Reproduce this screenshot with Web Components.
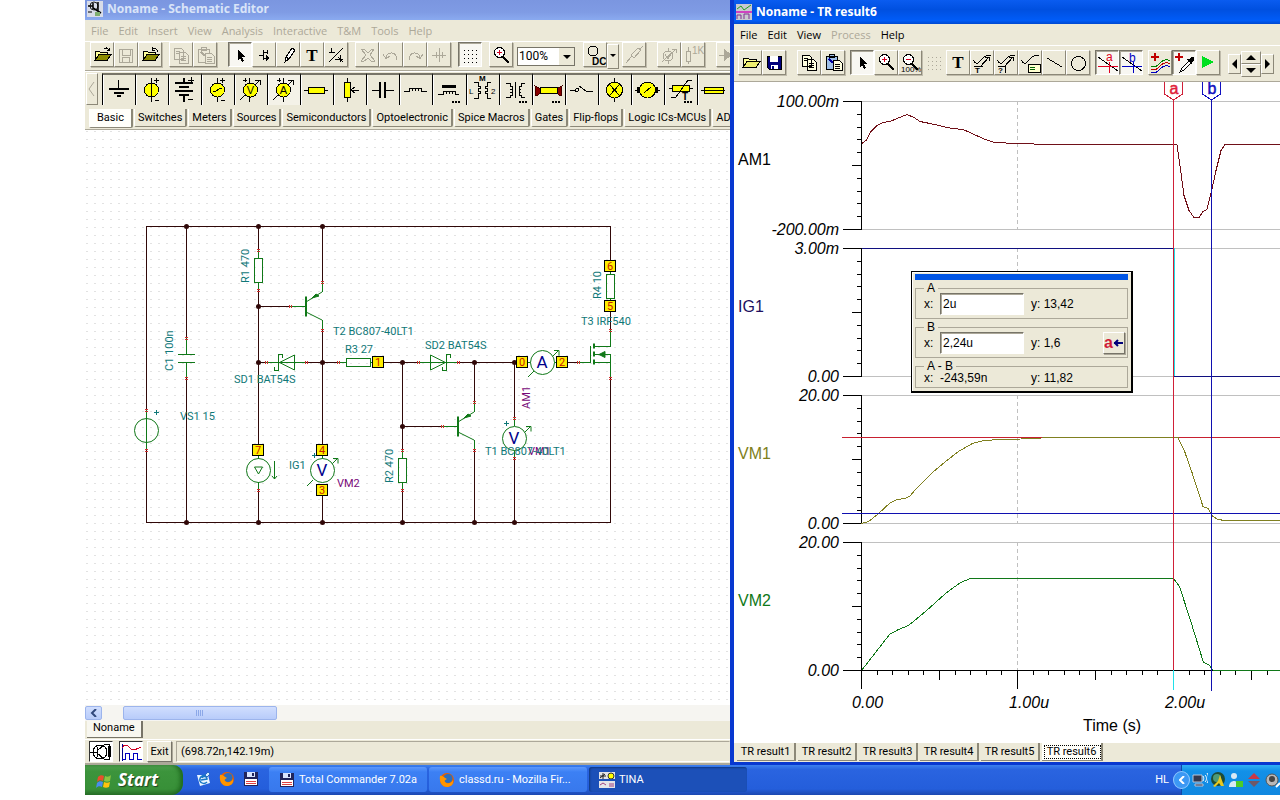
<!DOCTYPE html>
<html lang="en">
<head>
<meta charset="utf-8">
<title>Noname - Schematic Editor</title>
<style>
  html, body { height: 100%; }
  body {
    margin: 0;
    background: white;
    font: 11px/14px Roboto, "Liberation Sans", sans-serif;
    color: black;
    overflow: hidden;
  }
</style>
</head>
<body>
<xp-desktop>
  <schematic-editor></schematic-editor>
  <result-window></result-window>
</xp-desktop>

<script>
// ---- icons -------------------------------------------------------------
const FOLDER = '<path d="M5 17V8h4l1 1h7v3" fill="#ffff99" stroke="#000"/><path d="M5 17.500l4-6h12l-4 6z" fill="#8c8c00" stroke="#000"/>';
const CURSOR = '<path d="M10 7v10l2-2 2 4 2-1-2-4h3z" fill="currentColor"/>';
const PAGES = '<path d="M5 5h7l2 2v9H5zM10 9h6l3 3v8h-9z" fill="var(--page, none)" stroke="currentColor"/><path d="M7 8h4M7 10h3M12 13h5M12 15h5M12 17h5" stroke="currentColor"/>';
const LENS = '<path d="M14 14l6 6" stroke="#000" stroke-width="2"/><circle cx="10.500" cy="9.500" r="5" fill="#fff" stroke="#000"/>';
const GRID = '<path d="M6 7.500h14M6 11.500h14M6 15.500h14M6 19.500h14" stroke="currentColor" stroke-dasharray="1 3"/>';
const CURVE = '<path d="M3 10c3 5 5 4 8 0s6-5 10-4" stroke="currentColor"/>';
const MORE = '<path d="M20 28h8" stroke="#000" stroke-width="2" stroke-dasharray="2 1"/>';

const ICONS = {
  // 24 x 24, toolbars
  open: FOLDER + '<path d="M14 6c2-2 4-1 5 2m-2-1l2 1 1-3" stroke="#000"/>',
  openBack: FOLDER + '<path d="M20 9c-1-4-4-4-6-2m0-3v3h3" stroke="#000"/>',
  openPlain: '<path d="M5 17V8h5l1 1h7v3" fill="#ffff99" stroke="#000"/><path d="M5 17.500l4-6h13l-4 6z" fill="#eeee70" stroke="#000"/>',
  save: '<path d="M5 6h13v13H5zM8 6v6h8V6M8 19v-5h7v5" stroke="currentColor"/>',
  saveBlue: '<path d="M5 6h14v13H7l-2-2z" fill="#00007b" stroke="#000"/><path d="M8 6h8v6H8z" fill="#fff"/><path d="M9 15h7v4H9z" fill="#fff"/><path d="M10 16h2v3h-2z" fill="#00007b"/>',
  copy: PAGES,
  paste: '<path d="M5 6h11v13H5zM8 4h5v3H8z" fill="var(--clip, none)" stroke="currentColor"/><path d="M12 10h6l3 3v7h-9z" fill="var(--page, #ece9d8)" stroke="currentColor"/><path d="M14 14h5M14 16h5M14 18h5" stroke="currentColor"/><path d="M8 9l4 4" stroke="var(--arrow, currentColor)" stroke-width="2"/>',
  cursor: CURSOR,
  wire: '<path d="M11 7v10M7 12h4M11 9h4M11 15h6M15 7v4" stroke="#000"/><path d="M14 12v6l4-3z" fill="#000"/>',
  pen: '<path d="M9 19l1-5 6-9 3 2-6 9zM10 14l3 2" stroke="#000" fill="#fff"/>',
  text: '<text x="12" y="18" font-size="17" font-weight="bold" text-anchor="middle" font-family="Liberation Serif, serif" fill="currentColor">T</text>',
  note: '<path d="M5 9h6M7 5v5M5 19L19 5M11 16h8M16 12v7M14 14l5 5" stroke="#000"/>',
  erase: '<path d="M6 6l3 0 4 4 4-4h2l-4 6 5 6-3 1-4-4-5 4-2-1 5-6z" stroke="currentColor"/>',
  undo: '<path d="M7 15c0-7 11-7 11 2M4 11l3 5 4-3" stroke="currentColor"/>',
  redo: '<path d="M17 15c0-7-11-7-11 2M20 11l-3 5-4-3" stroke="currentColor"/>',
  mirror: '<path d="M5 12h14M12 5v14M9 9v6M15 9v6" stroke="currentColor"/>',
  grid: GRID,
  zoom: LENS + '<path d="M8 9.500h5M10.500 7v5" stroke="#d00020" stroke-width="1"/>',
  zoom100: LENS + '<path d="M8 9.500h5" stroke="#d00020" stroke-width="1"/><text x="3" y="22" font-size="8">100%</text>',
  dc: '<circle cx="10" cy="8" r="5" stroke="#000"/><text x="9" y="22" font-size="10" font-weight="bold">DC</text>',
  probe: '<path d="M4 20l6-7M9 12l3 3 7-8-3-2zM18 6l3-3" stroke="currentColor"/>',
  meter: '<circle cx="11" cy="13" r="5" stroke="currentColor"/><path d="M8 11l3 5 3-5M11 5v3M11 18v3M5 19L19 6M15 6h4v4" stroke="currentColor"/>',
  ohm: '<path d="M5 8h4v10H5zM7 4v4M7 18v3" stroke="currentColor"/><text x="11" y="11" font-size="10" fill="currentColor">1K</text>',
  diode: '<path d="M3 12h20" stroke="currentColor"/><path d="M8 6v12l8-6z" fill="currentColor"/>',
  curveT: CURVE + '<path d="M10 17L19 7M15 7h4v4M4 16h9" stroke="#000"/><text x="5" y="23" font-size="8" font-weight="bold">T</text>',
  curveQ: CURVE + '<path d="M10 17L19 7M15 7h4v4M4 16h7v7" stroke="#000"/><text x="4" y="23" font-size="8" font-weight="bold">?</text>',
  legend: CURVE + '<path d="M10 14h12v8H10z" fill="#ffffd0" stroke="#000"/><path d="M12 17h5M12 19h5" stroke="#060"/>',
  line: '<path d="M5 8l15 9" stroke="#000"/>',
  circle: '<circle cx="12.500" cy="13.500" r="7" stroke="#000"/>',
  markA: '<path d="M3 7l20 14" stroke="#000"/><path d="M3 16h20M14 12v11" stroke="#e00020"/><text x="11" y="11" font-size="12" fill="#e00020">a</text>',
  markB: '<path d="M3 7l20 14" stroke="#000"/><path d="M3 16h20M14 12v11" stroke="#0000c0"/><text x="10" y="12" font-size="12" fill="#0000c0">b</text>',
  addCurves: '<path d="M7 3v8M3 7h8" stroke="#c00000" stroke-width="2"/><path d="M3 16c4 2 6 0 9-3s6-5 10-2" stroke="#008000"/><path d="M3 19c4 2 6 0 9-3s6-5 10-2" stroke="#c00000"/><path d="M3 22c4 2 6 0 9-3s6-5 10-2" stroke="#0000c0"/>',
  addPick: '<path d="M7 3v8M3 7h8" stroke="#c00000" stroke-width="2"/><path d="M8 22l2-4 7-7 2 2-7 7z" fill="#fff" stroke="#000"/><path d="M14 9l3 0 2-2 3 0v3l-2 2v3z" fill="#000"/>',
  play: '<path d="M6 6v12l12-6z" fill="#00e020"/>',
  circuit: '<rect width="24" height="22" fill="#fff"/><circle cx="11" cy="11" r="7" stroke="#000"/><path d="M1 11h7M8 6v10M8 10l7-6M8 12l7 6M15 3h5v15h-5" stroke="#000"/><path d="M19 5h3v11h-3z" fill="#000"/>',
  scope: '<rect width="24" height="22" fill="#fff"/><path d="M3 3v17h20" stroke="#00008b"/><path d="M3 7c3-5 6-3 8 0s5 2 11-1" stroke="#d00020"/><path d="M3 18h3v-6h4v6h4v-6h4v6h5" stroke="#0000c0"/>',

  // 33 x 31, component bar
  ground: '<path d="M16.500 6v9" stroke="#000"/><path d="M7 15h20M12 19h10M15 22h4" stroke="#000" stroke-width="2"/>',
  source: '<circle cx="16.500" cy="16" r="7" fill="#ff0" stroke="#000"/><path d="M16.500 4v24M19 6h5M21 4v5M20 26h4" stroke="#000"/>',
  battery: '<path d="M16 4v5M7 9h18M11 13h10M7 17h18M11 21h10M16 21v7" stroke="#000" stroke-width="2"/><path d="M20 6h6M23 3v6M20 25h5" stroke="#000"/>',
  sine: '<circle cx="16.500" cy="16" r="7" fill="#ff0" stroke="#000"/><path d="M16.500 4v5M16.500 23v5M19 6h5M21 4v5M20 26h4M12 18c3 0 6-4 9-4" stroke="#000"/>',
  volt: '<path d="M6 26L26 6M21 6h5v5M15 4v24M9 6h4M11 4v4" stroke="#000"/><circle cx="16.500" cy="16" r="7" fill="#ff0" stroke="#000"/><text x="16.500" y="20" font-size="11" text-anchor="middle">V</text>',
  amp: '<path d="M6 26L26 6M21 6h5v5M16 4v24M10 6h4M12 4v4" stroke="#000"/><circle cx="16.500" cy="16" r="7" fill="#ff0" stroke="#000"/><text x="16.500" y="20" font-size="11" text-anchor="middle">A</text>',
  resistor: '<path d="M4 16h24" stroke="#000"/><rect x="8" y="13" width="16" height="6" fill="#ff0" stroke="#000"/>',
  pot: '<path d="M14 4v24M18 16h8M22 13l-4 3 4 3" stroke="#000"/><rect x="11" y="8" width="6" height="15" fill="#ff0" stroke="#000"/>',
  cap: '<path d="M6 16h8M20 16h8" stroke="#000"/><path d="M14 8v16M19 8v16" stroke="#000" stroke-width="2"/>',
  coil: '<path d="M5 17h5v-3h3v3v-3h3v3v-3h3v3v-3h3v3h6" stroke="#000"/>',
  coreCoil: '<path d="M10 12h14" stroke="#000" stroke-width="3"/><path d="M6 20h5v-3h3v3v-3h3v3v-3h3v3v-3h3v3h4" stroke="#000"/>' + MORE,
  coupled: '<path d="M8 8h4v4h2v2h-2v3h2v2h-2v5H8M25 8h-4v4h-2v2h2v3h-2v2h2v5h4" stroke="#000"/><text x="13" y="7" font-size="8" font-weight="bold">M</text><text x="3" y="20" font-size="8">L</text><text x="25" y="20" font-size="8">2</text>',
  transformer: '<path d="M7 9h4v3h2v3h-2h2v3h-2h2v3h-2v2H7M26 9h-4v3h-2v3h2h-2v3h2h-2v3h2v2h4M16.500 8v16" stroke="#000"/>' + MORE,
  relay: '<path d="M3 12l6 3v4l-5 3zM30 12l-6 3v4l5 3z" fill="#800" stroke="#400"/><rect x="8" y="13" width="17" height="6" fill="#ff0" stroke="#000"/>' + MORE,
  switch: '<path d="M5 16h6M14 12l7 5h7" stroke="#000"/><circle cx="12" cy="16" r="1.500" stroke="#000"/>',
  lamp: '<circle cx="16.500" cy="16" r="8" fill="#ff0" stroke="#000"/><path d="M16.500 4v4M16.500 24v4M11 10l11 12M22 10L11 22" stroke="#000"/>',
  motor: '<path d="M4 16h25" stroke="#000"/><path d="M6 13h5v6H6zM22 13h5v6h-5z" fill="#000"/><circle cx="16.500" cy="16" r="8" fill="#ff0" stroke="#000"/><path d="M13 19l7-6" stroke="#000"/>',
  thermistor: '<path d="M5 14h24" stroke="#000"/><rect x="8" y="11" width="17" height="6" fill="#ff0" stroke="#000"/><path d="M7 23h5L24 6h4" stroke="#000"/><text x="18" y="26" font-size="10" font-weight="bold">T</text>' + MORE,
  fuse: '<path d="M4 16h24" stroke="#000"/><rect x="7" y="13" width="19" height="6" fill="#ff0" stroke="#000"/><path d="M7 16h19" stroke="#000"/>',

  // 16 x 16, title bars and task bar
  schematicApp: '<path d="M0 0h16v16H0z" fill="#d8dce8"/><circle cx="7" cy="5" r="4" stroke="#222"/><path d="M1 5h5M6 2v6M11 1v9M6 7l8 5" stroke="#000" stroke-width="1.500"/><path d="M8 11h5v4H8z" fill="#7fae70"/><path d="M1 11h4" stroke="#000"/>',
  resultApp: '<path d="M0 0h16v16H0z" fill="#c8c8d0"/><path d="M1 5l4-3 3 4 7-5" stroke="#20a020"/><path d="M0 8h16" stroke="#d040c0" stroke-width="2"/><path d="M1 15V11h4v4M8 15v-5h5v5" stroke="#803090"/>',
  floppy: '<path d="M1 1h14v14H1z" fill="#20245c"/><path d="M4 1h8v5H4z" fill="#d8e4ff"/><path d="M9 2h2v3H9z" fill="#20245c"/><path d="M2 8h12v6H2z" fill="#fff"/><path d="M3 10.500h10M3 12.500h10" stroke="#e04040"/>',
  firefox: '<circle cx="8" cy="8" r="7" fill="#e66000"/><circle cx="9" cy="6.500" r="4.500" fill="#2a6fc0"/><path d="M1 4c3-1 4 2 7 3-1 1-3 1-2 3 2 2 6 2 8-2 1 5-3 7-6 7-5 0-8-5-7-11z" fill="#ff9500"/>',
  messenger: '<path d="M2 4h11l2 8-10 3z" fill="#eaf6ff"/><path d="M12 5c-4-2-8 1-7 5 1 3 5 3 7 1M6 9l6-1c0-3-4-3-5-1" stroke="#1878c8" stroke-width="1.500"/><path d="M10 4l3-3 2 2-3 3z" fill="#d8ecff" stroke="#2a6fc0"/>',
  tina: '<path d="M0 0h16v16H0z" fill="#e4e4e8"/><path d="M1 4h6M4 1v6M1 6l5-4" stroke="#222"/><circle cx="12" cy="4" r="3" fill="#ff0" stroke="#333"/><path d="M0 8h16" stroke="#1c50b8" stroke-width="2"/><path d="M1 13l3-2 3 2M10 12h5M10 14h5" stroke="#a04080"/>',
  windows: '<path d="M2 5c2-2 4-2 6-1L7 9C5 8 3 8 1 10z" fill="#e8502c"/><path d="M9 4c2 1 4 1 6-1l-1 6c-2 1-4 1-6 0z" fill="#8cc63f"/><path d="M1 11c2-2 4-2 6-1l-1 5c-2-1-4-1-6 1z" fill="#4a8cf0"/><path d="M8 10c2 1 4 1 6 0l-1 5c-2 1-4 1-6 0z" fill="#ffc20e"/>',
  network: '<path d="M1 3h9v7H1zM3 12h8v2H3z" fill="#33384e" stroke="#b8c4d8"/><path d="M11 4c1 2 1 3 0 5M13 3c2 2 2 5 0 7M15 1c2 3 2 7 0 10" stroke="#fff"/>',
  globe: '<circle cx="8" cy="7" r="7" fill="#1d4c38"/><circle cx="7" cy="6" r="4" fill="#4c9a78"/><path d="M10 3l4 11h-3l-2-3-4 4-2-1 5-5z" fill="#e8c820"/>',
  person: '<circle cx="6" cy="4" r="3" fill="#d8e8f4"/><path d="M1 15c0-8 10-8 10 0z" fill="#d8e8f4"/><path d="M8 9h7v6H8z" fill="#4ccc28"/>',
  arrows: '<path d="M8 1l6 6H2z" fill="#c83848"/><path d="M8 15l6-6H2z" fill="#705868"/>',
  speaker: '<circle cx="8" cy="8" r="6" fill="#b8b8b8" stroke="#555"/><circle cx="8" cy="7" r="3" fill="#444"/><path d="M12 15l4-4" stroke="#fff" stroke-width="2"/>'
};

// toolbar glyphs are hard-edged, the 16px ones are smooth
function icon(name, w, h) {
  const body = ICONS[name]
    .replace(/<text (?![^>]*fill)/g, '<text fill="#000" ');
  return `<svg width="${w}" height="${h}" viewBox="0 0 ${w} ${h}" fill="none" shape-rendering="${w > 16 ? 'crispEdges' : 'auto'}" aria-hidden="true"><g font-family="Liberation Sans, sans-serif">${body}</g></svg>`;
}

const RESET = `
  *, :host { box-sizing: border-box; }
  button { font: inherit; color: inherit; margin: 0; padding: 0; border: 0; background: none; white-space: nowrap; }
  svg { display: block; }
`;

// ---- small parts -------------------------------------------------------
class ToolButton extends HTMLElement {
  connectedCallback() {
    this.attachShadow({ mode: 'open' });
    const disabled = this.hasAttribute('disabled');
    this.shadowRoot.innerHTML = `
      <style>
        ${RESET}
        :host { display: block; flex: none; --page: #ffffe0; --clip: #9fc0e8; --arrow: #0000a0; }
        :host([disabled]) { --page: #ece9d8; --clip: #ece9d8; --arrow: #aca899; }
        :host([gap]) { margin-left: var(--gap, 5px); }
        :host([gap="wide"]) { margin-left: 11px; }
        button {
          width: 24px;
          height: 25px;
          overflow: hidden;
          border: 1px solid;
          border-color: #fff #8c8878 #8c8878 #fff;
          box-shadow: 1px 1px 0 #c0bcac;
          color: #000;
        }
        svg { margin: -1px; }
        :host([pressed]) button {
          background: #f8f7f2;
          border-color: #777468 #fff #fff #777468;
          box-shadow: inset 1px 1px 0 #aca899;
        }
        :host([disabled]) button { color: #aca899; }
        :host([flat]) button { border-color: transparent; box-shadow: none; }
      </style>
      <button type="button" aria-label="${this.getAttribute('label')}" ${disabled ? 'disabled' : ''}>${icon(this.getAttribute('icon'), 24, 24)}</button>
    `;
  }
}
customElements.define('tool-button', ToolButton);

class TitleBar extends HTMLElement {
  connectedCallback() {
    this.attachShadow({ mode: 'open' });
    this.shadowRoot.innerHTML = `
      <style>
        ${RESET}
        :host {
          display: flex;
          align-items: center;
          gap: 4px;
          height: 24px;
          padding-left: 2px;
          background: linear-gradient(#0a5cf0, #0050e0 40%, #005cf8 85%, #0048d0);
          color: white;
          font: bold 12px/16px "Noto Sans", "Open Sans", sans-serif;
          white-space: nowrap;
          overflow: hidden;
        }
        :host([inactive]) {
          height: 20px;
          padding-bottom: 2px;
          background: linear-gradient(#7b96e0, #7f9be4 60%, #8aaaf0);
          color: #d9e4f8;
        }
      </style>
      ${icon(this.getAttribute('icon'), 16, 16)}
      <span><slot></slot></span>
    `;
  }
}
customElements.define('title-bar', TitleBar);

class MenuBar extends HTMLElement {
  connectedCallback() {
    this.attachShadow({ mode: 'open' });
    const off = (this.getAttribute('off') || '').split(',');
    const items = this.getAttribute('items').split(',');
    this.shadowRoot.innerHTML = `
      <style>
        ${RESET}
        :host {
          display: block;
          background: #ece9d8;
          font: 11px/14px "Open Sans", sans-serif;
        }
        nav { display: flex; gap: 10px; height: 21px; align-items: center; padding: 0 6px; }
        button:disabled, :host([dim]) button { color: #aca899; }
      </style>
      <nav>${items.map(i => `<button type="button" ${off.includes(i) ? 'disabled' : ''}>${i.replace('&', '&amp;')}</button>`).join('')}</nav>
    `;
  }
}
customElements.define('menu-bar', MenuBar);

class ReadoutPanel extends HTMLElement {
  connectedCallback() {
    this.attachShadow({ mode: 'open' });
    this.shadowRoot.innerHTML = `
      <style>
        ${RESET}
        :host {
          display: block;
          width: 222px;
          padding: 2px 3px 3px;
          background: #ece9d8;
          border: 1px solid #000;
          border-right-width: 2px;
          border-bottom-width: 2px;
          box-shadow: inset 1px 1px 0 #fff;
          font: 12px/14px "Liberation Sans", sans-serif;
        }
        .bar { height: 6px; background: #0055e5; }
        fieldset {
          display: flex;
          align-items: center;
          height: 37px;
          margin: 2px 0 0;
          padding: 0 2px 4px 8px;
          border: 1px solid #aca899;
          min-width: 0;
        }
        fieldset.last { height: 28px; }
        legend { padding: 0 3px; line-height: 12px; }
        label, .x { width: 16px; }
        input {
          width: 84px;
          height: 22px;
          margin: 0 7px 0 0;
          padding: 0 2px;
          border: 1px solid;
          border-color: #777468 #fff #fff #777468;
          box-shadow: inset 1px 1px 0 #aca899;
          font: inherit;
        }
        .y { flex: 1; white-space: nowrap; }
        .diff { width: 91px; }
        button {
          width: 22px;
          height: 22px;
          border: 1px solid;
          border-color: #fff #777468 #777468 #fff;
          box-shadow: 1px 1px 0 #aca899;
          font: bold 16px/18px "Liberation Sans", sans-serif;
          color: #d01c38;
          display: flex;
          align-items: center;
        }
      </style>
      <div class="bar"></div>
      <fieldset>
        <legend>A</legend>
        <label for="ax">x:</label><input id="ax" value="2u"><span class="y">y: 13,42</span>
      </fieldset>
      <fieldset>
        <legend>B</legend>
        <label for="bx">x:</label><input id="bx" value="2,24u"><span class="y">y: 1,6</span>
        <button type="button" aria-label="Move to a">a<svg width="11" height="10" fill="none"><path d="M1 5h9M5 2L2 5l3 3" stroke="#00007b" stroke-width="2"/></svg></button>
      </fieldset>
      <fieldset class="last">
        <legend>A - B</legend>
        <span class="x">x:</span><span class="diff">-243,59n</span><span class="y">y: 11,82</span>
      </fieldset>
    `;
  }
}
customElements.define('readout-panel', ReadoutPanel);

// ---- component bar -----------------------------------------------------
class ComponentBar extends HTMLElement {
  connectedCallback() {
    this.attachShadow({ mode: 'open' });
    const parts = ['ground', 'source', 'battery', 'sine', 'volt', 'amp', 'resistor', 'pot', 'cap', 'coil',
      'coreCoil', 'coupled', 'transformer', 'relay', 'switch', 'lamp', 'motor', 'thermistor', 'fuse'];
    const tabs = ['Basic', 'Switches', 'Meters', 'Sources', 'Semiconductors', 'Optoelectronic',
      'Spice Macros', 'Gates', 'Flip-flops', 'Logic ICs-MCUs', 'AD'];
    this.shadowRoot.innerHTML = `
      <style>
        ${RESET}
        :host { display: block; background: #ece9d8; overflow: hidden; }
        .parts { display: flex; padding-top: 1px; border-top: 1px solid #fff; }
        .back {
          width: 12px;
          height: 32px;
          margin: 0 4px 0 1px;
          border: 1px solid;
          border-color: #fff #8c8878 #8c8878 #fff;
        }
        .part {
          flex: 1 0 33px;
          height: 32px;
          border-left: 1px solid #000;
          border-top: 2px solid #777468;
          box-shadow: inset 1px 0 0 #fff;
        }
        .part svg { margin: -1px auto 0 -1px; }
        .part:nth-child(7) { background: #f4f2e8; }
        .tabs { display: flex; gap: 1px; height: 25px; padding: 4px 0 0 4px; border-bottom: 1px solid #aca899; }
        .tabs button {
          height: 18px;
          padding: 0 3px;
          border-right: 2px solid #8c8878;
          border-bottom: 1px solid #8c8878;
          border-left: 1px solid #fff;
          border-radius: 0 0 2px 2px;
        }
        .tabs .on { height: 19px; padding: 0 7px; background: #fffffa; }
      </style>
      <div class="parts">
        <button type="button" class="back" aria-label="Scroll left"><svg width="10" height="30" fill="none"><path d="M7 8L2 15l5 7" stroke="#aca899"/></svg></button>
        ${parts.map(p => `<button type="button" class="part" aria-label="${p}">${icon(p, 33, 31)}</button>`).join('')}
      </div>
      <div class="tabs" role="tablist">
        ${tabs.map((t, i) => `<button type="button" role="tab" class="${i ? '' : 'on'}">${t}</button>`).join('')}
      </div>
    `;
  }
}
customElements.define('component-bar', ComponentBar);

// ---- circuit drawing ---------------------------------------------------
class CircuitSheet extends HTMLElement {
  connectedCallback() {
    this.attachShadow({ mode: 'open' });
    const dots = [[186, 226], [258, 226], [322, 226], [258, 306], [258, 362], [322, 362], [402, 362], [474, 362],
      [514, 362], [402, 426], [186, 522], [258, 522], [322, 522], [402, 522], [474, 522], [514, 522]];
    // pin marks: v = pin on a vertical lead, h = pin on a horizontal lead
    const pinsV = [[258, 250], [258, 290], [322, 282], [322, 330], [186, 338], [186, 378], [146, 410], [146, 450],
      [258, 490], [402, 450], [402, 490], [474, 402], [474, 450], [514, 418], [514, 458], [610, 330], [610, 378]];
    const pinsH = [[290, 306], [266, 362], [306, 362], [338, 362], [418, 362], [458, 362], [442, 426], [578, 362]];
    const nodes = [[258, 450, 7], [322, 450, 4], [322, 490, 3], [378, 362, 1], [522, 362, 0], [562, 362, 2], [610, 266, 6], [610, 306, 5]];
    this.shadowRoot.innerHTML = `
      <style>
        :host { display: block; background: #fff; overflow: hidden; }
        svg { display: block; width: 100%; height: 100%; }
        .crisp { shape-rendering: crispEdges; }
        .wire { stroke: #300808; fill: none; }
        .part { stroke: #107818; fill: none; }
        .pin { fill: #d03030; }
        text { font: 11px Roboto, "Liberation Sans", sans-serif; fill: #107878; }
        .big { font-size: 17px; fill: #00008b; text-anchor: middle; }
        .meter { fill: #780878; }
        .num { font-size: 11px; fill: #c82000; text-anchor: middle; }
      </style>
      <svg>
        <defs>
          <pattern id="dots" width="8" height="8" patternUnits="userSpaceOnUse" x="1" y="1">
            <rect width="2" height="1" fill="#e2e2e2"/>
          </pattern>
        </defs>
        <rect width="100%" height="100%" fill="url(#dots)"/>
        <g transform="translate(-85 -130)">
          <g class="crisp wire">
            <path d="M146.500 410V226.500H610.500V260M146.500 450V522.500H610.500V378M186.500 226V338M186.500 378V522"/>
            <path d="M258.500 226V250M258.500 290V444M258.500 490V522M258 306.500H290M258 362.500H266M306 362.500H338M322.500 226V282M322.500 330V444M322.500 496V522"/>
            <path d="M384 362.500H418M402.500 362V450M402.500 490V522M402 426.500H442M458 362.500H516M474.500 362V402M474.500 450V522M514.500 362V418M514.500 458V522M568 362.500H578M610.500 312V330"/>
          </g>
          <g class="crisp part">
            <path d="M258.500 250V258M254.500 258.500h8v24h-8zM258.500 282V290"/>
            <path d="M402.500 450V458M398.500 458.500h8v24h-8zM402.500 482V490"/>
            <path d="M606.500 274.500h8v24h-8zM610.500 272v2M610.500 298v2"/>
            <path d="M338 362.500H346M346.500 358.500h24v8h-24zM370 362.500H373"/>
            <path d="M186.500 338V354M178 354.500H195M178 362.500H195M186.500 362V378"/>
            <path d="M146.500 410V450M258.500 455v4M258.500 482V490M322.500 455v4M514.500 418V426M514.500 450V458M528 362.500h3M554 362.500h3"/>
            <path d="M290 306.500H306M322.500 282V292M322.500 320V330"/>
            <path d="M442 426.500H458M474.500 402V412M474.500 440V450"/>
            <path d="M266 362.500H306M418 362.500H458M578 362.500H590.500V346M610.500 330V346.500H594M610.500 378V354.500H594M594 362.500H610"/>
            <path d="M282.500 358v-3.500h-4v16h-4v-4M450.500 358v-3.500h-4v16h-4v-4"/>
          </g>
          <g class="part">
            <path d="M306 296.500v20M458 416.500v20M594 343.500v5M594 351.500v5M594 359.500v5" stroke-width="2"/>
            <path d="M306 302l16-10M306 312l16 8M458 422l16-10M458 432l16 8"/>
            <path d="M312 298l4-4 3 2zM464 418l4-4 3 2z" fill="#107818"/>
            <path d="M599 354.500l6-3v6z" fill="#107818"/>
            <path d="M294.500 355v15l-15-7.500zM430.500 355v15l15-7.500z"/>
            <circle cx="146.500" cy="430.500" r="12"/>
            <circle cx="258.500" cy="470.500" r="12"/>
            <path d="M254.500 467h8l-4 7zM274.500 461v18M272 476l2.500 3 2.500-3"/>
            <path d="M313 480l-6 6M331 465l7-7M333 458.500h5v5M534 371l-6 6M552 357l7-7M554 350.500h5v5M524 433l7-7M526 426.500h5v5"/>
            <g fill="#fff"><circle cx="322.500" cy="470.500" r="12"/><circle cx="542.500" cy="362.500" r="12"/><circle cx="514.500" cy="438.500" r="12"/></g>
            <path d="M154 412.500h5M156.500 410v5M312 455.500h5M314.500 453v5M504 423.500h5M506.500 421v5" stroke="#107878"/>
          </g>
          <g class="crisp pin">
            ${pinsV.map(([x, y]) => `<rect x="${x - 1}" y="${y - 1}" width="3" height="1"/><rect x="${x - 1}" y="${y + 1}" width="3" height="1"/>`).join('')}
            ${pinsH.map(([x, y]) => `<rect x="${x - 1}" y="${y - 1}" width="1" height="3"/><rect x="${x + 1}" y="${y - 1}" width="1" height="3"/>`).join('')}
          </g>
          ${dots.map(([x, y]) => `<circle cx="${x + 0.5}" cy="${y + 0.5}" r="2.500" fill="#300808"/>`).join('')}
          ${nodes.map(([x, y, n]) => `<rect class="crisp" x="${x - 5.5}" y="${y - 5.5}" width="11" height="11" fill="#ffee00" stroke="#000"/><text class="num" x="${x}" y="${y + 4}">${n}</text>`).join('')}
          <text transform="translate(249 283) rotate(-90)">R1 470</text>
          <text transform="translate(173 371) rotate(-90)">C1 100n</text>
          <text transform="translate(393 483) rotate(-90)">R2 470</text>
          <text transform="translate(601 299) rotate(-90)">R4 10</text>
          <text x="333" y="335">T2 BC807-40LT1</text>
          <text x="345" y="353">R3 27</text>
          <text x="425" y="349">SD2 BAT54S</text>
          <text x="234" y="383">SD1 BAT54S</text>
          <text x="180" y="420">VS1 15</text>
          <text x="289" y="469">IG1</text>
          <text x="337" y="487" class="meter">VM2</text>
          <text x="581" y="325">T3 IRF540</text>
          <text x="528" y="455" class="meter">VM1</text>
          <text x="485" y="455">T1 BC807-40LT1</text>
          <text transform="translate(530 409) rotate(-90)" class="meter">AM1</text>
          <text class="big" x="322" y="476">V</text>
          <text class="big" x="542" y="368">A</text>
          <text class="big" x="514" y="444">V</text>
        </g>
      </svg>
    `;
  }
}
customElements.define('circuit-sheet', CircuitSheet);

class SchematicEditor extends HTMLElement {
  connectedCallback() {
    this.attachShadow({ mode: 'open' });
    this.shadowRoot.innerHTML = `
      <style>
        ${RESET}
        :host { display: flex; flex-direction: column; background: #ece9d8; overflow: hidden; min-width: 0; --gap: 7px; }
        .tools { display: flex; align-items: center; height: 30px; padding-left: 5px; border-top: 1px solid #fff; border-bottom: 1px solid #aca899; overflow: hidden; }
        .zoom {
          display: flex;
          align-items: center;
          width: 58px;
          height: 19px;
          margin: 0 8px 0 4px;
          background: #fff;
          border: 1px solid #777468;
          flex: none;
        }
        select { appearance: none; flex: 1; min-width: 0; border: 0; background: none; padding: 0 0 0 1px; font: 12px Roboto, sans-serif; color: #000; }
        .zoom svg { background: #ece9d8; border-left: 1px solid #fff; }
        .drop { width: 12px; height: 25px; border: 1px solid; border-color: #fff #8c8878 #8c8878 #fff; margin-right: 3px; display: grid; place-items: center; flex: none; }
        circuit-sheet { flex: 1; min-height: 0; }
        .scroll { display: flex; height: 16px; background: #f6f5f1; padding: 1px 0; gap: 21px; }
        .scroll button, .thumb { background: linear-gradient(#d0defe, #b8ccfa); border: 1px solid #9cb4ec; border-radius: 2px; }
        .scroll button { width: 17px; display: grid; place-items: center; }
        .thumb { flex: 0 1 154px; display: grid; place-items: center; }
        .sheets { display: flex; height: 18px; padding-left: 2px; }
        .sheets button { height: 17px; padding: 0 6px 2px; border-right: 2px solid #777468; border-bottom: 1px solid #777468; background: #f8f7f0; }
        .status { display: flex; align-items: center; height: 26px; padding-left: 4px; border-top: 1px solid #fff; border-bottom: 2px solid #aca899; }
        .view { width: 24px; height: 21px; margin-right: 6px; border: 1px solid; border-color: #333 #fff #fff #333; overflow: hidden; }
        .view svg { margin: -1px; }
        .exit { width: 25px; height: 21px; margin: 0 4px 0 -2px; border: 1px solid; border-color: #fff #777468 #777468 #fff; box-shadow: 1px 1px 0 #aca899; }
        .pos { flex: 1; height: 21px; padding-left: 4px; line-height: 20px; border: 1px solid; border-color: #aca899 transparent #fff #aca899; }
      </style>
      <title-bar inactive icon="schematicApp">Noname - Schematic Editor</title-bar>
      <menu-bar dim items="File,Edit,Insert,View,Analysis,Interactive,T&M,Tools,Help"></menu-bar>
      <div class="tools">
        <tool-button icon="open" label="Open"></tool-button>
        <tool-button icon="save" label="Save" disabled></tool-button>
        <tool-button icon="openBack" label="Open from web"></tool-button>
        <tool-button icon="copy" label="Copy" disabled gap></tool-button>
        <tool-button icon="paste" label="Paste" disabled></tool-button>
        <tool-button icon="cursor" label="Select" pressed gap="wide"></tool-button>
        <tool-button icon="wire" label="Last component"></tool-button>
        <tool-button icon="pen" label="Wire"></tool-button>
        <tool-button icon="text" label="Text"></tool-button>
        <tool-button icon="note" label="Input and output"></tool-button>
        <tool-button icon="erase" label="Delete" disabled gap></tool-button>
        <tool-button icon="undo" label="Rotate left" disabled></tool-button>
        <tool-button icon="redo" label="Rotate right" disabled></tool-button>
        <tool-button icon="mirror" label="Mirror" disabled></tool-button>
        <tool-button icon="grid" label="Grid" pressed gap></tool-button>
        <tool-button icon="zoom" label="Zoom" gap></tool-button>
        <span class="zoom">
          <select aria-label="Zoom level"><option>100%</option></select>
          <svg width="16" height="17"><path d="M4 7h8l-4 4z"/></svg>
        </span>
        <tool-button icon="dc" label="DC mode"></tool-button>
        <button type="button" class="drop" aria-label="Mode list"><svg width="6" height="4"><path d="M0 0h6l-3 3z"/></svg></button>
        <tool-button icon="probe" label="Probe" disabled></tool-button>
        <tool-button icon="meter" label="Meter" disabled gap="wide"></tool-button>
        <tool-button icon="ohm" label="Select value" disabled></tool-button>
        <tool-button icon="diode" label="Diode" disabled gap="wide"></tool-button>
      </div>
      <component-bar></component-bar>
      <circuit-sheet></circuit-sheet>
      <div class="scroll">
        <button type="button" aria-label="Scroll left"><svg width="8" height="8" fill="none"><path d="M6 0L2 4l4 4" stroke="#30487c" stroke-width="2"/></svg></button>
        <div class="thumb"><svg width="8" height="6"><path d="M.5 0v6M2.500 0v6M4.500 0v6M6.500 0v6" stroke="#8ca8e8"/></svg></div>
      </div>
      <div class="sheets"><button type="button">Noname</button></div>
      <div class="status">
        <button type="button" class="view" aria-label="Schematic">${icon('circuit', 24, 22)}</button>
        <button type="button" class="view" aria-label="Diagram">${icon('scope', 24, 22)}</button>
        <button type="button" class="exit">Exit</button>
        <span class="pos">(698.72n,142.19m)</span>
      </div>
    `;
  }
}
customElements.define('schematic-editor', SchematicEditor);

// ---- diagrams ----------------------------------------------------------
class ResultPlot extends HTMLElement {
  connectedCallback() {
    this.attachShadow({ mode: 'open' });
    const panels = [
      { top: 101, hi: '100.00m', lo: '-200.00m', name: 'AM1', color: '#000' },
      { top: 248, hi: '3.00m', lo: '0.00', name: 'IG1', color: '#201060' },
      { top: 395, hi: '20.00', lo: '0.00', name: 'VM1', color: '#808020' },
      { top: 542, hi: '20.00', lo: '0.00', name: 'VM2', color: '#107818' }
    ];
    const axis = p => {
      let ticks = '';
      for (let i = 1; i < 10; i++) {
        const y = Math.round(p.top + i * 12.8) + 0.5;
        ticks += `M${i === 5 ? 852 : 857} ${y}H861`;
      }
      return `
        <path class="grid" d="M862 ${p.top}.5H3000M862 ${p.top + 128}.5H3000"/>
        <path class="grid" stroke-dasharray="4 3" d="M1017.500 ${p.top}v128"/>
        <path class="axis" d="M843 ${p.top}.5H861.500V${p.top + 128}.5H843${ticks}"/>
        <text class="num" x="839" y="${p.top + 6}">${p.hi}</text>
        <text class="num" x="839" y="${p.top + 134}">${p.lo}</text>
        <text x="738" y="${p.top + 64}" fill="${p.color}">${p.name}</text>`;
    };
    let xTicks = '';
    for (let i = 0; i < 60; i++) {
      const x = Math.round(861 + i * 15.6) + 0.5;
      xTicks += `M${x} 670v${i % 10 === 0 ? 19 : i % 5 === 0 ? 10 : 5}`;
    }
    this.shadowRoot.innerHTML = `
      <style>
        :host { display: block; position: relative; background: #fff; overflow: hidden; }
        svg { display: block; width: 100%; height: 100%; }
        path { fill: none; shape-rendering: crispEdges; }
        .grid { stroke: #c0c0c0; }
        .axis { stroke: #000; }
        text { font: 16px "Liberation Sans", sans-serif; }
        .num { font-style: italic; text-anchor: end; }
        .time { font-style: italic; }
        .mark { text-anchor: middle; }
        readout-panel { position: absolute; left: 177px; top: 189px; }
      </style>
      <svg>
        <g transform="translate(-734 -82)">
          ${panels.map(axis).join('')}
          <path class="axis" d="M861 670.500H3000${xTicks}"/>
          <rect x="842" y="437" width="2200" height="1" fill="#c82030"/>
          <path d="M862 248.500H1173" stroke="#101080"/>
          <path d="M1174 376.500H3000" stroke="#101080"/>
          <path stroke="#701018" d="M862 143.500l4-3 5-9 6-6 6-3 7-1 7-3 10-4 7 3 6 4 10 2 22 5 11 1 7 3 15 7 10 3 22 1 33 1H1177l3 21 4 30 5 15 5 7h5l4-6 4-2 4-16 5-23 5-20 4-6H3000"/>
          <path stroke="#808020" d="M861.500 523.500l7-2 9-7 13-12 7-3 7-1 5-2 6-7 10-10 7-7 13-11 13-10 14-8 11-3 17-1 41-1"/>
          <path stroke="#808020" d="M1042 437.500H1178l7 15 7 20 11 34 5 2 5 8 5 3 7 1H3000"/>
          <path stroke="#107818" d="M861.500 670.500l28-36 9-5 10-4 17-14 20-18 15-11 10-4H1173.500l6 8 11 34 13 42 5 2 5 6H3000"/>
          <rect x="842" y="513" width="2200" height="1" fill="#1010b0"/>
          <rect x="1174" y="248" width="1" height="128" fill="#20e0e8"/>
          <rect x="1173" y="100" width="1" height="570" fill="#d02038"/>
          <rect x="1173" y="670" width="1" height="20" fill="#20e0e8"/>
          <rect x="1211" y="100" width="1" height="591" fill="#1010b0"/>
          <path d="M1164.500 82v12l9 6 9-6v-12" stroke="#d02038"/>
          <path d="M1202.500 82v12l9 6 9-6v-12" stroke="#1010c0"/>
          <text class="mark" x="1174" y="94" fill="#e02038" stroke="#e02038" stroke-width=".5">a</text>
          <text class="mark" x="1212" y="94" fill="#1010c0" stroke="#1010c0" stroke-width=".5">b</text>
          <text class="time" x="852" y="708">0.00</text>
          <text class="time" x="1009" y="708">1.00u</text>
          <text class="time" x="1165" y="708">2.00u</text>
          <text x="1083" y="731">Time (s)</text>
        </g>
      </svg>
      <readout-panel></readout-panel>
    `;
  }
}
customElements.define('result-plot', ResultPlot);

class ResultWindow extends HTMLElement {
  connectedCallback() {
    this.attachShadow({ mode: 'open' });
    this.shadowRoot.innerHTML = `
      <style>
        ${RESET}
        :host {
          display: flex;
          flex-direction: column;
          min-width: 0;
          overflow: hidden;
          background: #ece9d8;
          border-left: 4px solid #0838d0;
          border-bottom: 3px solid #0838d0;
        }
        title-bar { flex: none; }
        .tools { display: flex; align-items: center; height: 37px; padding-left: 4px; border-top: 1px solid #fff; border-bottom: 1px solid #aca899; overflow: hidden; }
        .nudge { display: flex; align-items: center; margin-left: 8px; flex: none; }
        .nudge button { display: grid; place-items: center; width: 13px; height: 20px; border: 1px solid; border-color: #fff #8c8878 #8c8878 #fff; }
        .nudge .stack button { width: 20px; height: 13px; }
        result-plot { flex: 1; min-height: 0; }
        .tabs { display: flex; gap: 2px; height: 19px; padding-left: 3px; }
        .tabs button { flex: 0 0 59px; height: 18px; border-right: 2px solid #8c8878; border-bottom: 1px solid #8c8878; }
        .tabs .on { flex-basis: 61px; background: #fffffa; outline: 1px dotted #000; outline-offset: -3px; }
      </style>
      <title-bar icon="resultApp">Noname - TR result6</title-bar>
      <menu-bar items="File,Edit,View,Process,Help" off="Process"></menu-bar>
      <div class="tools">
        <tool-button icon="openPlain" label="Open"></tool-button>
        <tool-button icon="saveBlue" label="Save"></tool-button>
        <tool-button icon="copy" label="Copy" gap="wide"></tool-button>
        <tool-button icon="paste" label="Paste"></tool-button>
        <tool-button icon="cursor" label="Select" pressed gap></tool-button>
        <tool-button icon="zoom" label="Zoom in"></tool-button>
        <tool-button icon="zoom100" label="Zoom to normal"></tool-button>
        <tool-button icon="grid" label="Grid" disabled flat></tool-button>
        <tool-button icon="text" label="Text"></tool-button>
        <tool-button icon="curveT" label="Auto label"></tool-button>
        <tool-button icon="curveQ" label="Pointer"></tool-button>
        <tool-button icon="legend" label="Legend"></tool-button>
        <tool-button icon="line" label="Line"></tool-button>
        <tool-button icon="circle" label="Circle"></tool-button>
        <tool-button icon="markA" label="Cursor a" pressed gap></tool-button>
        <tool-button icon="markB" label="Cursor b" pressed></tool-button>
        <tool-button icon="addCurves" label="Add curves" gap></tool-button>
        <tool-button icon="addPick" label="Pick curve" pressed></tool-button>
        <tool-button icon="play" label="Run"></tool-button>
        <span class="nudge">
          <button type="button" aria-label="Left"><svg width="6" height="10"><path d="M5 0v10L0 5z"/></svg></button>
          <span class="stack">
            <button type="button" aria-label="Up"><svg width="10" height="5"><path d="M0 5h10L5 0z"/></svg></button>
            <button type="button" aria-label="Down"><svg width="10" height="5"><path d="M0 0h10L5 5z"/></svg></button>
          </span>
          <button type="button" aria-label="Right"><svg width="6" height="10"><path d="M0 0v10l5-5z"/></svg></button>
        </span>
      </div>
      <result-plot></result-plot>
      <div class="tabs" role="tablist">
        ${[1, 2, 3, 4, 5, 6].map(n => `<button type="button" role="tab" class="${n === 6 ? 'on' : ''}">TR result${n}</button>`).join('')}
      </div>
    `;
  }
}
customElements.define('result-window', ResultWindow);

// ---- task bar and desktop ----------------------------------------------
class TaskBar extends HTMLElement {
  connectedCallback() {
    this.attachShadow({ mode: 'open' });
    this.shadowRoot.innerHTML = `
      <style>
        ${RESET}
        :host {
          display: flex;
          align-items: stretch;
          height: 30px;
          background: linear-gradient(#3c80ee, #2a64e0 15%, #245edb 80%, #1c48b0);
          color: white;
          overflow: hidden;
        }
        .start {
          display: flex;
          align-items: center;
          gap: 6px;
          width: 98px;
          flex: none;
          padding: 0 0 0 11px;
          border-radius: 0 10px 12px 0;
          background: linear-gradient(#58a858, #3c943c 20%, #389038 80%, #2c702c);
          box-shadow: inset -3px 0 4px #1f6a1f;
          font: italic bold 17px/22px "Open Sans", sans-serif;
          text-shadow: 1px 1px 1px #204020;
        }
        .quick { display: flex; align-items: center; gap: 8px; padding: 0 10px 2px 12px; flex: none; }
        .task {
          flex: 0 1 158px;
          display: flex;
          align-items: center;
          gap: 4px;
          height: 25px;
          margin: 2px 2px 0 0;
          padding-left: 10px;
          border-radius: 3px;
          background: linear-gradient(#5c98fc, #3c80f4 20%, #3878ec);
          min-width: 0;
        }
        .task.on { background: #1c50b8; box-shadow: inset 1px 1px 2px #103880; }
        .lang { margin: 0 12px 0 auto; align-self: center; }
        .tray { display: flex; align-items: center; gap: 2px; flex: 0 0 98px; background: linear-gradient(#30b0f4, #1290e8 20%, #1088e0); border-left: 1px solid #1048a8; }
        .tray .more { width: 17px; height: 18px; margin-left: -9px; border-radius: 50%; background: #3c98f4; border: 1px solid #90c8ff; display: grid; place-items: center; }
        .tray svg { flex: none; }
      </style>
      <button type="button" class="start">${icon('windows', 16, 17)}Start</button>
      <div class="quick">${icon('messenger', 16, 16)}${icon('firefox', 16, 16)}${icon('floppy', 16, 16)}</div>
      <button type="button" class="task">${icon('floppy', 16, 16)}Total Commander 7.02a</button>
      <button type="button" class="task">${icon('firefox', 16, 16)}classd.ru - Mozilla Fir...</button>
      <button type="button" class="task on">${icon('tina', 16, 16)}TINA</button>
      <span class="lang">HL</span>
      <div class="tray">
        <button type="button" class="more" aria-label="Show hidden icons"><svg width="6" height="8" fill="none"><path d="M5 0L1 4l4 4" stroke="#fff" stroke-width="2"/></svg></button>
        ${['network', 'globe', 'person', 'arrows', 'speaker'].map(n => icon(n, 16, 16)).join('')}
      </div>
    `;
  }
}
customElements.define('task-bar', TaskBar);

class XpDesktop extends HTMLElement {
  connectedCallback() {
    this.attachShadow({ mode: 'open' });
    this.shadowRoot.innerHTML = `
      <style>
        :host {
          display: grid;
          grid-template-rows: minmax(0, 1fr) auto;
          height: 100vh;
          box-sizing: border-box;
          padding: 0 0 5px 85px;
        }
        .windows { display: grid; grid-template-columns: minmax(0, 645fr) minmax(0, 550fr); grid-template-rows: 100%; min-height: 0; }
      </style>
      <div class="windows"><slot></slot></div>
      <task-bar></task-bar>
    `;
  }
}
customElements.define('xp-desktop', XpDesktop);
</script>
</body>
</html>
